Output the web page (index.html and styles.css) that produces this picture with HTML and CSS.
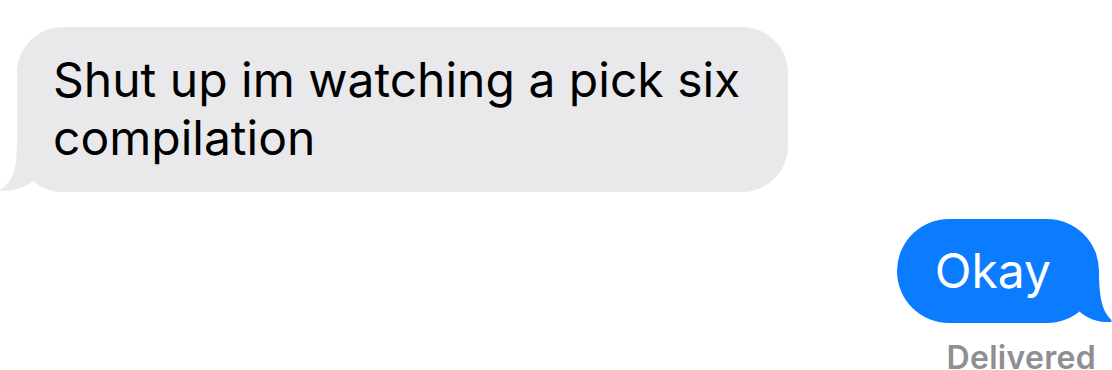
FILE: index.html
```html
<!DOCTYPE html>
<html lang="en">
<head>
<meta charset="utf-8">
<title>Messages</title>
<link rel="stylesheet" href="styles.css">
</head>
<body>
<main class="thread">
  <div class="msg them">
    <p class="msg-text">Shut up im watching a pick six compilation</p>
    <svg class="tail tail-them" width="60" height="60" viewBox="0 0 60 60" aria-hidden="true">
      <path d="M17 12 C17 36 13 50 1 57 C0 57.6 0.3 59 1.5 59 C14 59.5 25 55 33 49 L40 25 Z"/>
    </svg>
  </div>
  <div class="msg me">
    <p class="msg-text">Okay</p>
    <svg class="tail tail-me" width="60" height="60" viewBox="0 0 60 60" aria-hidden="true">
      <path d="M47 8 C47 34 50 48 59 56.5 C60 57.3 59.6 59 58.5 59 C46 59.5 36 56 28 49 L15 20 Z"/>
    </svg>
  </div>
  <div class="status">Delivered</div>
</main>
</body>
</html>
```

FILE: styles.css
```css
html, body {
  margin: 0;
  padding: 0;
  background: #ffffff;
}

body {
  font-family: Inter, "Noto Sans", "Liberation Sans", sans-serif;
  overflow: hidden;
}

.thread {
  display: flex;
  flex-direction: column;
  padding: 27px 13px 0 17px;
}

.msg {
  position: relative;
  font-size: 48px;
  line-height: 58px;
  box-sizing: border-box;
}

.msg-text {
  margin: 0;
  position: relative;
  z-index: 1;
}

.them {
  align-self: flex-start;
  width: 771px;
  background: #e9e9eb;
  color: #000000;
  border-radius: 46px;
  padding: 24px 30px 25px 36px;
  margin-bottom: 27px;
}

.me {
  align-self: flex-end;
  background: #0b7bff;
  color: #ffffff;
  border-radius: 52px;
  padding: 23px 48px 23px 38px;
}

.tail {
  position: absolute;
  bottom: 0;
  display: block;
}

.tail-them {
  left: -17px;
  fill: #e9e9eb;
}

.tail-me {
  right: -13px;
  fill: #0b7bff;
}

.status {
  align-self: flex-end;
  margin: 23px 3px 0 0;
  font-size: 32px;
  line-height: 23px;
  font-weight: 600;
  letter-spacing: 0.3px;
  color: #8e8e93;
}
```
